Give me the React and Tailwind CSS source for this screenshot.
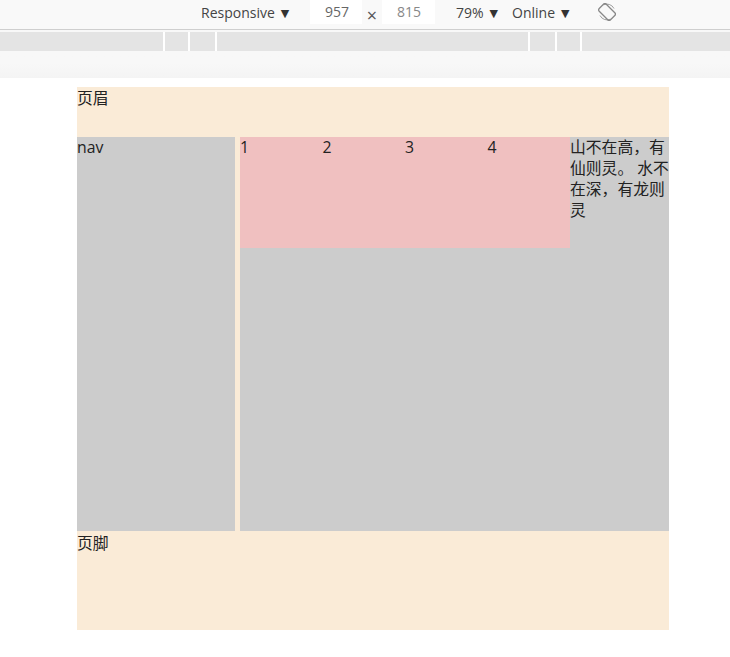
import React from 'react';

const Caret = () => <span className="ml-[6px] text-[11px] leading-none text-[#333] font-['DejaVu_Sans',sans-serif]">▼</span>;

const Toolbar = () => (
  <div className="h-[30px] bg-[#f9f9f9] border-b border-[#cfcfcf] flex items-start text-[14px] leading-[26px] text-[#444] font-['Open_Sans','Liberation_Sans',sans-serif]">
    <div className="w-[201px]" />
    <div className="w-[109px] flex items-center">Responsive<Caret /></div>
    <div className="w-[52px] h-[24px] pl-[2px] bg-white flex items-center justify-center text-[#666]">957</div>
    <div className="w-[20px] mt-[2px] text-center text-[#555] text-[18px]">×</div>
    <div className="w-[53px] h-[24px] pl-[1px] bg-white flex items-center justify-center text-[#888]">815</div>
    <div className="w-[21px]" />
    <div className="w-[56px] flex items-center">79%<Caret /></div>
    <div className="w-[86px] flex items-center">Online<Caret /></div>
    <svg className="mt-[3px]" width="18" height="18" viewBox="0 0 18 18" fill="none" stroke="#888" strokeWidth="1.3">
      <rect x="4" y="1" width="10" height="16" rx="2" transform="rotate(-45 9 9)" />
      <path d="M5.5 1.8A8 8 0 0 1 16 5.5M12.5 16.2A8 8 0 0 1 2 12.5" strokeWidth="0.8" />
    </svg>
  </div>
);

const Ruler = () => (
  <div className="h-[48px] pt-[2px] bg-gradient-to-b from-[#f8f8f8] from-70% to-[#f4f4f4]">
    <div className="h-[19px] bg-[#e4e4e4] flex">
      <div className="w-[163px]" />
      <div className="w-[2px] bg-white" />
      <div className="w-[23px]" />
      <div className="w-[2px] bg-white" />
      <div className="w-[25px]" />
      <div className="w-[2px] bg-white" />
      <div className="w-[311px]" />
      <div className="w-[2px] bg-white" />
      <div className="w-[25px]" />
      <div className="w-[2px] bg-white" />
      <div className="w-[23px]" />
      <div className="w-[2px] bg-white" />
    </div>
  </div>
);

export default function App() {
  return (
    <div className="w-[730px] h-[657px] bg-white overflow-hidden">
      <Toolbar />
      <Ruler />
      <div className="ml-[77px] mt-[9px] w-[592px] bg-[#faebd7] text-[15.8px] leading-[21px] text-[#222] font-['Open_Sans','Noto_Sans_CJK_SC',sans-serif]">
        <header className="h-[50px] pt-[1px]">页眉</header>
        <div className="h-[394px] flex">
          <nav className="w-[158px] bg-[#cccccc]">nav</nav>
          <main className="ml-[5px] flex-1 bg-[#cccccc] flex items-start">
            <div className="w-[330px] h-[111px] bg-[#f0c0c0] grid grid-cols-4">
              <div>1</div>
              <div>2</div>
              <div>3</div>
              <div>4</div>
            </div>
            <aside className="flex-1">山不在高，有仙则灵。 水不在深，有龙则灵</aside>
          </main>
        </div>
        <footer className="h-[99px] pt-[2px]">页脚</footer>
      </div>
    </div>
  );
}
